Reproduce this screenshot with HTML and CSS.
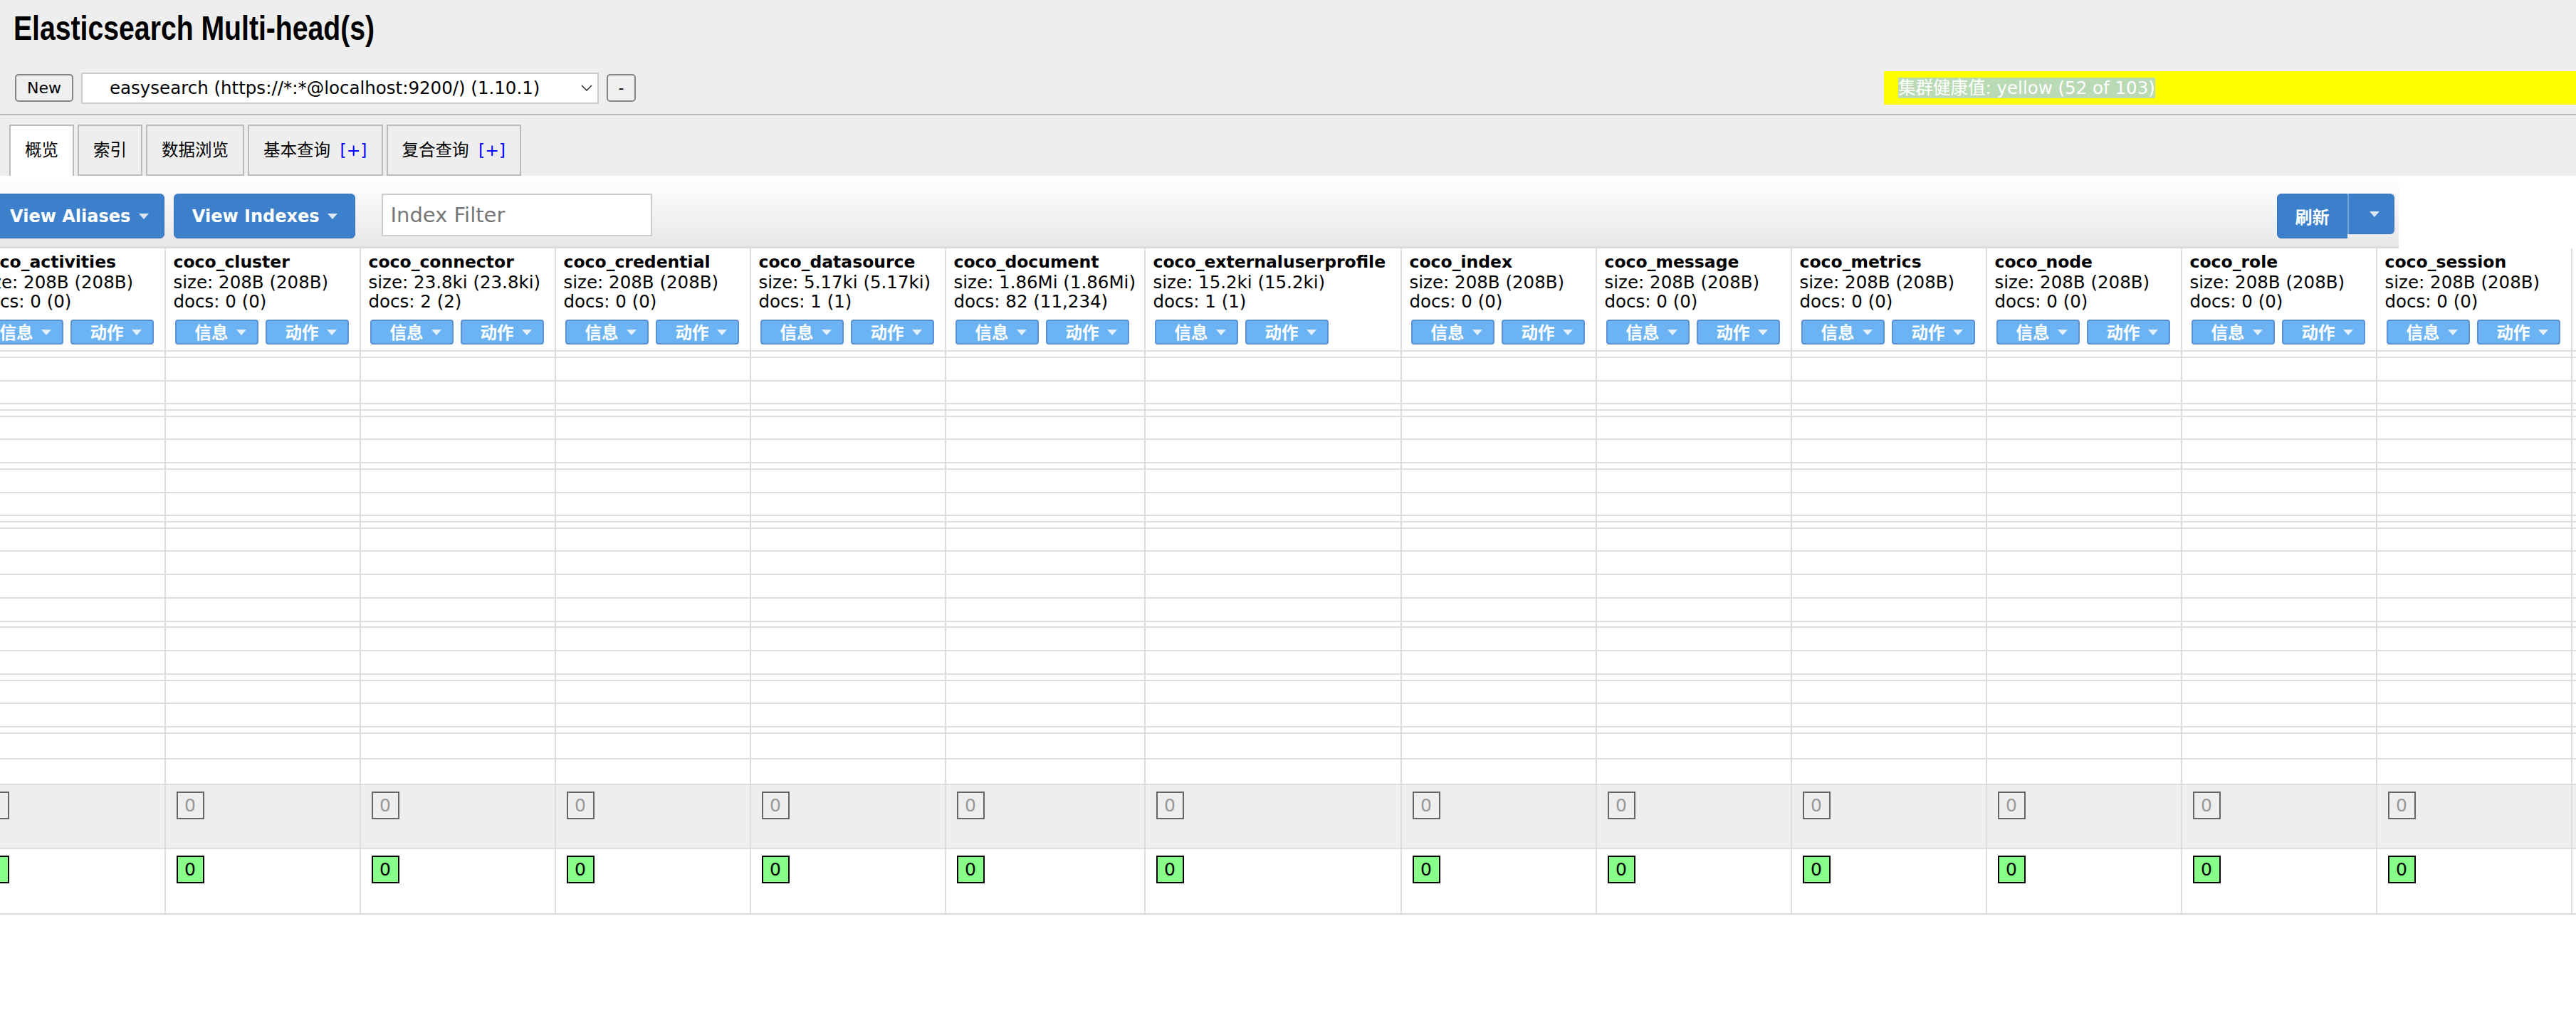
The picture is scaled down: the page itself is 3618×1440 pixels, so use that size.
FILE: index.html
```html
<!DOCTYPE html>
<html lang="zh-CN">
<head>
<meta charset="utf-8">
<title>Elasticsearch Multi-head(s)</title>
<link rel="stylesheet" href="styles.css">
</head>
<body>
<header class="app-header">
  <div class="header-top">
    <h1 class="app-title">Elasticsearch Multi-head(s)</h1>
    <div class="connect-row">
      <button class="btn-plain btn-new">New</button>
      <span class="select-wrap">
        <select class="cluster-select"><option>easysearch (https://*:*@localhost:9200/) (1.10.1)</option></select>
        <svg class="chevron" viewBox="0 0 16 9"><polyline points="1,1 8,8 15,1"/></svg>
      </span>
      <button class="btn-plain btn-minus">-</button>
      <div class="health"><span class="health-text">集群健康值: yellow (52 of 103)</span></div>
    </div>
  </div>
  <nav class="tabs">
    <div class="tab active">概览</div>
    <div class="tab">索引</div>
    <div class="tab">数据浏览</div>
    <div class="tab">基本查询 <span class="tab-plus">[+]</span></div>
    <div class="tab">复合查询 <span class="tab-plus">[+]</span></div>
  </nav>
</header>
<main class="main">
  <div class="toolbar">
    <button class="btn-blue btn-view">View Aliases<span class="caret"></span></button>
    <button class="btn-blue btn-view">View Indexes<span class="caret"></span></button>
    <input class="index-filter" type="text" placeholder="Index Filter">
    <div class="btn-group">
      <button class="btn-blue btn-refresh">刷新</button>
      <button class="btn-blue btn-drop"><span class="caret"></span></button>
    </div>
  </div>
  <table class="overview">
    <colgroup>
      <col class="col-node">
      <col class="col-idx"><col class="col-idx"><col class="col-idx"><col class="col-idx"><col class="col-idx">
      <col class="col-doc"><col class="col-ext">
      <col class="col-idx"><col class="col-idx"><col class="col-idx"><col class="col-idx"><col class="col-idx"><col class="col-idx">
      <col class="col-idx">
    </colgroup>
    <thead>
      <tr class="row-head">
        <th></th>
        <th><div class="idx-name">coco_activities</div><div class="idx-stat">size: 208B (208B)</div><div class="idx-stat">docs: 0 (0)</div><div class="idx-actions"><button class="btn-light">信息<span class="caret"></span></button><button class="btn-light">动作<span class="caret"></span></button></div></th>
        <th><div class="idx-name">coco_cluster</div><div class="idx-stat">size: 208B (208B)</div><div class="idx-stat">docs: 0 (0)</div><div class="idx-actions"><button class="btn-light">信息<span class="caret"></span></button><button class="btn-light">动作<span class="caret"></span></button></div></th>
        <th><div class="idx-name">coco_connector</div><div class="idx-stat">size: 23.8ki (23.8ki)</div><div class="idx-stat">docs: 2 (2)</div><div class="idx-actions"><button class="btn-light">信息<span class="caret"></span></button><button class="btn-light">动作<span class="caret"></span></button></div></th>
        <th><div class="idx-name">coco_credential</div><div class="idx-stat">size: 208B (208B)</div><div class="idx-stat">docs: 0 (0)</div><div class="idx-actions"><button class="btn-light">信息<span class="caret"></span></button><button class="btn-light">动作<span class="caret"></span></button></div></th>
        <th><div class="idx-name">coco_datasource</div><div class="idx-stat">size: 5.17ki (5.17ki)</div><div class="idx-stat">docs: 1 (1)</div><div class="idx-actions"><button class="btn-light">信息<span class="caret"></span></button><button class="btn-light">动作<span class="caret"></span></button></div></th>
        <th><div class="idx-name">coco_document</div><div class="idx-stat">size: 1.86Mi (1.86Mi)</div><div class="idx-stat">docs: 82 (11,234)</div><div class="idx-actions"><button class="btn-light">信息<span class="caret"></span></button><button class="btn-light">动作<span class="caret"></span></button></div></th>
        <th><div class="idx-name">coco_externaluserprofile</div><div class="idx-stat">size: 15.2ki (15.2ki)</div><div class="idx-stat">docs: 1 (1)</div><div class="idx-actions"><button class="btn-light">信息<span class="caret"></span></button><button class="btn-light">动作<span class="caret"></span></button></div></th>
        <th><div class="idx-name">coco_index</div><div class="idx-stat">size: 208B (208B)</div><div class="idx-stat">docs: 0 (0)</div><div class="idx-actions"><button class="btn-light">信息<span class="caret"></span></button><button class="btn-light">动作<span class="caret"></span></button></div></th>
        <th><div class="idx-name">coco_message</div><div class="idx-stat">size: 208B (208B)</div><div class="idx-stat">docs: 0 (0)</div><div class="idx-actions"><button class="btn-light">信息<span class="caret"></span></button><button class="btn-light">动作<span class="caret"></span></button></div></th>
        <th><div class="idx-name">coco_metrics</div><div class="idx-stat">size: 208B (208B)</div><div class="idx-stat">docs: 0 (0)</div><div class="idx-actions"><button class="btn-light">信息<span class="caret"></span></button><button class="btn-light">动作<span class="caret"></span></button></div></th>
        <th><div class="idx-name">coco_node</div><div class="idx-stat">size: 208B (208B)</div><div class="idx-stat">docs: 0 (0)</div><div class="idx-actions"><button class="btn-light">信息<span class="caret"></span></button><button class="btn-light">动作<span class="caret"></span></button></div></th>
        <th><div class="idx-name">coco_role</div><div class="idx-stat">size: 208B (208B)</div><div class="idx-stat">docs: 0 (0)</div><div class="idx-actions"><button class="btn-light">信息<span class="caret"></span></button><button class="btn-light">动作<span class="caret"></span></button></div></th>
        <th><div class="idx-name">coco_session</div><div class="idx-stat">size: 208B (208B)</div><div class="idx-stat">docs: 0 (0)</div><div class="idx-actions"><button class="btn-light">信息<span class="caret"></span></button><button class="btn-light">动作<span class="caret"></span></button></div></th>
        <th></th>
      </tr>
    </thead>
    <tbody>
      <tr class="r-s"><td></td><td></td><td></td><td></td><td></td><td></td><td></td><td></td><td></td><td></td><td></td><td></td><td></td><td></td><td></td></tr>
      <tr class="r-b"><td></td><td></td><td></td><td></td><td></td><td></td><td></td><td></td><td></td><td></td><td></td><td></td><td></td><td></td><td></td></tr>
      <tr class="r-b"><td></td><td></td><td></td><td></td><td></td><td></td><td></td><td></td><td></td><td></td><td></td><td></td><td></td><td></td><td></td></tr>
      <tr class="r-s"><td></td><td></td><td></td><td></td><td></td><td></td><td></td><td></td><td></td><td></td><td></td><td></td><td></td><td></td><td></td></tr>
      <tr class="r-s"><td></td><td></td><td></td><td></td><td></td><td></td><td></td><td></td><td></td><td></td><td></td><td></td><td></td><td></td><td></td></tr>
      <tr class="r-b"><td></td><td></td><td></td><td></td><td></td><td></td><td></td><td></td><td></td><td></td><td></td><td></td><td></td><td></td><td></td></tr>
      <tr class="r-b"><td></td><td></td><td></td><td></td><td></td><td></td><td></td><td></td><td></td><td></td><td></td><td></td><td></td><td></td><td></td></tr>
      <tr class="r-s"><td></td><td></td><td></td><td></td><td></td><td></td><td></td><td></td><td></td><td></td><td></td><td></td><td></td><td></td><td></td></tr>
      <tr class="r-b"><td></td><td></td><td></td><td></td><td></td><td></td><td></td><td></td><td></td><td></td><td></td><td></td><td></td><td></td><td></td></tr>
      <tr class="r-b"><td></td><td></td><td></td><td></td><td></td><td></td><td></td><td></td><td></td><td></td><td></td><td></td><td></td><td></td><td></td></tr>
      <tr class="r-s"><td></td><td></td><td></td><td></td><td></td><td></td><td></td><td></td><td></td><td></td><td></td><td></td><td></td><td></td><td></td></tr>
      <tr class="r-s"><td></td><td></td><td></td><td></td><td></td><td></td><td></td><td></td><td></td><td></td><td></td><td></td><td></td><td></td><td></td></tr>
      <tr class="r-b"><td></td><td></td><td></td><td></td><td></td><td></td><td></td><td></td><td></td><td></td><td></td><td></td><td></td><td></td><td></td></tr>
      <tr class="r-b"><td></td><td></td><td></td><td></td><td></td><td></td><td></td><td></td><td></td><td></td><td></td><td></td><td></td><td></td><td></td></tr>
      <tr class="r-b"><td></td><td></td><td></td><td></td><td></td><td></td><td></td><td></td><td></td><td></td><td></td><td></td><td></td><td></td><td></td></tr>
      <tr class="r-b"><td></td><td></td><td></td><td></td><td></td><td></td><td></td><td></td><td></td><td></td><td></td><td></td><td></td><td></td><td></td></tr>
      <tr class="r-s"><td></td><td></td><td></td><td></td><td></td><td></td><td></td><td></td><td></td><td></td><td></td><td></td><td></td><td></td><td></td></tr>
      <tr class="r-b"><td></td><td></td><td></td><td></td><td></td><td></td><td></td><td></td><td></td><td></td><td></td><td></td><td></td><td></td><td></td></tr>
      <tr class="r-b"><td></td><td></td><td></td><td></td><td></td><td></td><td></td><td></td><td></td><td></td><td></td><td></td><td></td><td></td><td></td></tr>
      <tr class="r-s"><td></td><td></td><td></td><td></td><td></td><td></td><td></td><td></td><td></td><td></td><td></td><td></td><td></td><td></td><td></td></tr>
      <tr class="r-b"><td></td><td></td><td></td><td></td><td></td><td></td><td></td><td></td><td></td><td></td><td></td><td></td><td></td><td></td><td></td></tr>
      <tr class="r-b"><td></td><td></td><td></td><td></td><td></td><td></td><td></td><td></td><td></td><td></td><td></td><td></td><td></td><td></td><td></td></tr>
      <tr class="r-s"><td></td><td></td><td></td><td></td><td></td><td></td><td></td><td></td><td></td><td></td><td></td><td></td><td></td><td></td><td></td></tr>
      <tr class="r-c"><td></td><td></td><td></td><td></td><td></td><td></td><td></td><td></td><td></td><td></td><td></td><td></td><td></td><td></td><td></td></tr>
      <tr class="r-c"><td></td><td></td><td></td><td></td><td></td><td></td><td></td><td></td><td></td><td></td><td></td><td></td><td></td><td></td><td></td></tr>
      <tr class="r-gray">
        <td></td>
        <td><div class="shard shard-unassigned">0</div></td>
        <td><div class="shard shard-unassigned">0</div></td>
        <td><div class="shard shard-unassigned">0</div></td>
        <td><div class="shard shard-unassigned">0</div></td>
        <td><div class="shard shard-unassigned">0</div></td>
        <td><div class="shard shard-unassigned">0</div></td>
        <td><div class="shard shard-unassigned">0</div></td>
        <td><div class="shard shard-unassigned">0</div></td>
        <td><div class="shard shard-unassigned">0</div></td>
        <td><div class="shard shard-unassigned">0</div></td>
        <td><div class="shard shard-unassigned">0</div></td>
        <td><div class="shard shard-unassigned">0</div></td>
        <td><div class="shard shard-unassigned">0</div></td>
        <td></td>
      </tr>
      <tr class="r-green">
        <td></td>
        <td><div class="shard shard-started">0</div></td>
        <td><div class="shard shard-started">0</div></td>
        <td><div class="shard shard-started">0</div></td>
        <td><div class="shard shard-started">0</div></td>
        <td><div class="shard shard-started">0</div></td>
        <td><div class="shard shard-started">0</div></td>
        <td><div class="shard shard-started">0</div></td>
        <td><div class="shard shard-started">0</div></td>
        <td><div class="shard shard-started">0</div></td>
        <td><div class="shard shard-started">0</div></td>
        <td><div class="shard shard-started">0</div></td>
        <td><div class="shard shard-started">0</div></td>
        <td><div class="shard shard-started">0</div></td>
        <td></td>
      </tr>
    </tbody>
  </table>
</main>
<script src="app.js"></script>
</body>
</html>
```

FILE: styles.css
```css
* { box-sizing: border-box; }
html, body { margin: 0; padding: 0; }
body {
  background: #fff;
  color: #000;
  font-family: "DejaVu Sans", "Noto Sans CJK SC", sans-serif;
  font-size: 24px;
  overflow: hidden;
}

/* ---------- header ---------- */
.app-header { background: #eee; }
.header-top {
  padding: 12px 0 13px;
  border-bottom: 2px solid #bbb;
}
.app-title {
  margin: 0 0 0 19px;
  font-family: "Liberation Sans", Arial, sans-serif;
  font-weight: bold;
  font-size: 48px;
  line-height: 56px;
  transform: scaleX(0.816);
  transform-origin: 0 0;
}
.connect-row {
  display: flex;
  align-items: center;
  height: 47px;
  margin-top: 32px;
  padding-left: 21px;
}
.btn-plain {
  height: 39px;
  padding: 0;
  border: 2px solid #858585;
  border-radius: 5px;
  background: #efefef;
  color: #000;
  font-family: "DejaVu Sans", sans-serif;
  font-size: 22px;
}
.btn-new { width: 82px; }
.btn-minus { width: 41px; margin-left: 11px; }
.select-wrap {
  position: relative;
  display: block;
  width: 727px;
  height: 44px;
  margin-left: 11px;
}
.cluster-select {
  -webkit-appearance: none;
  appearance: none;
  display: block;
  width: 100%;
  height: 100%;
  margin: 0;
  padding: 0 40px 0 38px;
  border: 2px solid #ccc;
  border-radius: 0;
  background: #fff;
  color: #000;
  font-family: "DejaVu Sans", sans-serif;
  font-size: 24.5px;
}
.chevron {
  position: absolute;
  top: 17px;
  right: 9px;
  width: 16px;
  height: 9px;
  fill: none;
  stroke: #333;
  stroke-width: 1.6;
  pointer-events: none;
}
.health {
  display: flex;
  align-items: center;
  width: 972px;
  height: 47px;
  margin-left: auto;
  padding-left: 20px;
  background: #ff0;
}
.health-text {
  background: #b9dab5;
  color: #fff;
  font-size: 24.5px;
  line-height: 29px;
  white-space: nowrap;
}

/* ---------- tabs ---------- */
.tabs {
  display: flex;
  align-items: flex-end;
  gap: 5px;
  height: 85px;
  padding-left: 13px;
}
.tab {
  height: 72px;
  padding: 0 20px;
  border: 2px solid #bbb;
  background: #eee;
  font-size: 23.5px;
  line-height: 68px;
  white-space: nowrap;
}
.tab.active {
  background: #fff;
  border-bottom: 0;
  padding-bottom: 2px;
}
.tab-plus { color: #00f; margin-left: 6px; }

/* ---------- overview ---------- */
.main { overflow: hidden; background: #fff; }
.toolbar {
  display: flex;
  align-items: flex-start;
  height: 102px;
  padding: 25px 6px 0 237px;
  background: linear-gradient(#fff, #e8e8ea);
  border-bottom: 3px solid #ddd;
}
.btn-blue {
  display: flex;
  align-items: center;
  height: 63px;
  padding: 0 21px 0 25px;
  border: 1px solid #3a74bb;
  border-radius: 6px;
  background: #3c7fcb;
  color: #fff;
  font-family: "DejaVu Sans", "Noto Sans CJK SC", sans-serif;
  font-weight: bold;
  font-size: 24px;
  white-space: nowrap;
}
.btn-view + .btn-view { margin-left: 12.5px; padding-right: 24px; }
.caret {
  display: inline-block;
  width: 0;
  height: 0;
  margin-left: 12px;
  border-left: 7px solid transparent;
  border-right: 7px solid transparent;
  border-top: 8px solid rgba(255, 255, 255, 0.82);
}
.index-filter {
  width: 380px;
  height: 60px;
  margin: 0 0 0 37px;
  padding: 0 10px;
  border: 2px solid #ccc;
  border-radius: 0;
  background: #fff;
  color: #000;
  font-family: "DejaVu Sans", sans-serif;
  font-size: 29px;
  outline: none;
}
.index-filter::placeholder { color: #777; }
.btn-group {
  display: flex;
  align-items: flex-start;
  margin-left: auto;
}
.btn-refresh {
  width: 99px;
  padding: 0;
  justify-content: center;
  border-radius: 6px 0 0 6px;
}
.btn-drop {
  width: 66px;
  height: 57px;
  padding: 0 0 0 8px;
  justify-content: center;
  border-left: 2px solid #7aa8dd;
  border-radius: 0 6px 6px 0;
}
.btn-drop .caret { margin-left: 0; }

.overview {
  table-layout: fixed;
  width: 4135.5px;
  border-collapse: separate;
  border-spacing: 0;
}
.overview th,
.overview td {
  padding: 0 0 0 11px;
  border-right: 2px solid #ddd;
  border-bottom: 2px solid #ddd;
  vertical-align: top;
  text-align: left;
  font-weight: normal;
  white-space: nowrap;
}
.col-node { width: 207.5px; }
.col-idx { width: 274px; }
.col-doc { width: 280px; }
.col-ext { width: 360px; }

.row-head { height: 145.3px; }
.row-head th { padding-top: 6px; }
.idx-name {
  font-weight: bold;
  font-size: 23.5px;
  line-height: 27.6px;
}
.idx-stat {
  font-size: 24.5px;
  line-height: 27.6px;
}
.idx-actions {
  display: flex;
  gap: 10px;
  margin: 11.5px 0 0 2px;
}
.btn-light {
  display: flex;
  align-items: center;
  width: 117px;
  height: 35px;
  padding: 0 0 0 26px;
  border: 2px solid #5b91d4;
  border-radius: 4px;
  background: #6bb3f3;
  color: #fff;
  font-family: "Noto Sans CJK SC", sans-serif;
  font-weight: bold;
  font-size: 23.5px;
  line-height: 1;
}
.btn-light .caret { margin-left: 11px; }

.r-s { height: 8.6px; }
.r-b { height: 32.8px; }
.r-c { height: 35.9px; }
.r-gray { height: 90px; background: #eee; }
.r-green { height: 92.3px; }
.r-gray td,
.r-green td { padding-top: 9px; }

.shard {
  display: flex;
  align-items: center;
  justify-content: center;
  width: 39px;
  height: 39px;
  margin-left: 4px;
  border: 2px solid #000;
  font-size: 25px;
  line-height: 1;
}
.shard-unassigned { border-color: #666; color: #999; }
.shard-started { background: #8f8; }
```

FILE: app.js
```js
document.querySelector('.main').scrollLeft = 249;
```
